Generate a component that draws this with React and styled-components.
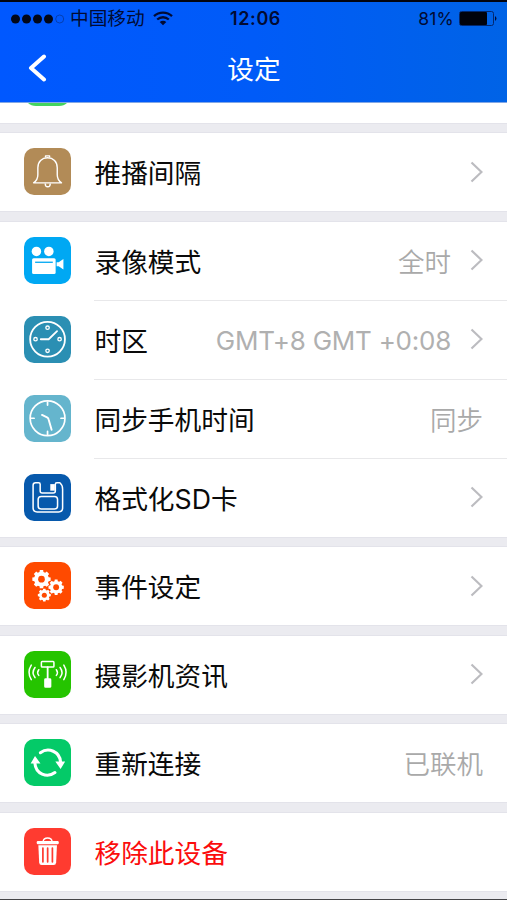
import styled, { createGlobalStyle } from "styled-components";

const GlobalStyle = createGlobalStyle`
  * {
    box-sizing: border-box;
  }

  body {
    margin: 0;
    background: #ebebf0;
    font-family: Inter, "Noto Sans CJK SC", sans-serif;
  }
`;

const Screen = styled.div`
  width: 507px;
  height: 900px;
  overflow: hidden;
  display: flex;
  flex-direction: column;
  background: #ebebf0;
  border-top: 2px solid #02040f;
  border-bottom: 1px solid #444448;
`;

const Header = styled.header`
  flex: none;
  height: 101px;
  background: linear-gradient(90deg, #0058ff 0%, #005bf8 50%, #0063e6 100%);
  border-bottom: 1px solid #3b7ee8;
`;

const StatusBar = styled.div`
  height: 32px;
  padding: 0 9px 0 11px;
  display: grid;
  grid-template-columns: 1fr auto 1fr;
  align-items: center;
  color: #020b33;
`;

const Carrier = styled.div`
  display: flex;
  align-items: center;
  padding-top: 1px;
  font-size: 18.7px;
  line-height: 32px;

  svg:last-child {
    margin: -2px 0 0 8px;
  }
`;

const Dots = styled.svg`
  margin: -1px 5px 0 0;
`;

const Clock = styled.div`
  padding-left: 2px;
  font-size: 18px;
  font-weight: 600;
  letter-spacing: 0.6px;
`;

const Power = styled.div`
  display: flex;
  justify-content: flex-end;
  align-items: center;
  gap: 5px;
  font-size: 17.5px;
  letter-spacing: 0.2px;
`;

const NavBar = styled.div`
  height: 68px;
  display: grid;
  grid-template-columns: 60px 1fr 60px;
  align-items: center;
`;

const BackButton = styled.button`
  padding: 0 0 0 27px;
  border: 0;
  background: none;
  display: flex;
`;

const Title = styled.h1`
  margin: 1px 0 0 1px;
  color: #fff;
  font-size: 26.7px;
  font-weight: 400;
  line-height: 40px;
  text-align: center;
`;

const Group = styled.section`
  flex: none;
  margin-bottom: 10.5px;
  background: #fff;
  box-shadow: 0 0 0 1px rgba(218, 218, 226, 0.45);
`;

const ScrolledRow = styled.div`
  height: 19.5px;
  padding-left: 26px;
  display: flex;
  align-items: flex-start;
`;

const Row = styled.div`
  height: ${(props) => (props.$last ? 78 : 79)}px;
  padding-left: 24px;
  display: flex;
`;

const Tile = styled.div`
  flex: none;
  width: 47px;
  height: 47px;
  margin: 15px 23px 0 0;
  border-radius: 10px;
  background: ${(props) => props.$color};

  svg {
    display: block;
  }
`;

const RowBody = styled.div`
  flex: 1;
  display: flex;
  align-items: center;
  padding: 2px 24px 0 0.5px;
  border-bottom: ${(props) => (props.$last ? "0" : "1px solid #e8e8ea")};
`;

const Label = styled.span`
  flex: 1;
  color: ${(props) => (props.$danger ? "#fb0d0d" : "#0a0a0a")};
  font-size: 26.7px;
  line-height: 40px;
  white-space: nowrap;
`;

const Value = styled.span`
  color: ${(props) => (props.$latin ? "#b0b0b0" : "#a9a9a9")};
  font-size: ${(props) => (props.$latin ? 26 : 26.5)}px;
  font-weight: ${(props) => (props.$latin ? 400 : 350)};
  letter-spacing: ${(props) => (props.$latin ? "-0.25px" : "0")};
  line-height: 40px;
  white-space: nowrap;
`;

const Chevron = styled.svg`
  margin: -3px 0 0 19px;
`;

function gearPath(cx, cy, r, teeth) {
  const step = (Math.PI * 2) / teeth;
  const points = [];
  for (let i = 0; i < teeth; i++) {
    [
      [-0.34, 0.8],
      [-0.23, 1],
      [0.23, 1],
      [0.34, 0.8],
    ].forEach(([offset, scale]) => {
      const angle = (i + offset) * step;
      const x = cx + Math.cos(angle) * r * scale;
      const y = cy + Math.sin(angle) * r * scale;
      points.push(`${x.toFixed(2)} ${y.toFixed(2)}`);
    });
  }
  return `M${points.join("L")}Z`;
}

const icons = {
  bell: (
    <g stroke="#fff" strokeWidth="1.4" strokeLinejoin="round">
      <path d="M9.5 34.5c3-2 4.2-4.5 4.2-8v-7c0-6 4-9.8 9.6-9.8s9.6 3.8 9.6 9.8v7c0 3.5 1.2 6 4.2 8z" />
      <path d="M21.3 9.5V7.8h4v1.7M21 35c0 4.5 5 4.5 5 0" />
    </g>
  ),
  camera: (
    <g fill="#fff">
      <circle cx="12.3" cy="14.3" r="4.7" />
      <circle cx="24.6" cy="14.3" r="4.7" />
      <rect x="8" y="21" width="23.3" height="15.5" rx="1.5" />
      <path d="M32.3 25h2l4.7-3.2v10.3l-4.7-3.2h-2z" />
      <path d="M11 25h17.5" stroke="#00a8f3" strokeWidth="1.3" />
    </g>
  ),
  zone: (
    <g stroke="#fff" strokeWidth="1.8" strokeLinecap="round">
      <circle cx="23.3" cy="23" r="17.2" />
      <g strokeWidth="1.3">
        <circle cx="23.3" cy="11.6" r="1.7" />
        <circle cx="23.3" cy="34.4" r="1.7" />
        <circle cx="11.4" cy="23" r="1.7" />
        <circle cx="35.2" cy="23" r="1.7" />
      </g>
      <path d="M16.6 23h7.8l8.3-8" />
    </g>
  ),
  sync: (
    <g stroke="#fff" strokeWidth="1.7" strokeLinecap="round">
      <circle cx="23.3" cy="23" r="17.2" />
      <path d="M23.3 7v3M23.3 36v3M7 23h3M36.6 23h3" />
      <path d="M17.8 19.7l5 2.5q1.2.6 1.5 1.8l3 10.4" strokeWidth="1.9" />
    </g>
  ),
  floppy: (
    <g stroke="#fff" strokeWidth="1.5" strokeLinejoin="round">
      <path d="M11.5 8.7h3q1.5 0 1.5 1.5v6.5q0 2 2 2h11q2 0 2-2V10.2q0-1.5 1.5-1.5h3q2.7 2.3 2.7 6.3v18.5q0 4-4 4H13q-4 0-4-4V11.2q0-2.5 2.5-2.5z" />
      <rect x="14" y="22.2" width="19.2" height="12.5" rx="3" />
      <path d="M26 10h4.5v6.5H26z" fill="#fff" stroke="none" />
    </g>
  ),
  gears: (
    <g fill="#fff">
      <path d={gearPath(17.3, 17, 9.2, 8)} />
      <path d={gearPath(31.8, 25, 7.7, 8)} />
      <path d={gearPath(20.1, 32.8, 6.5, 8)} />
      <g fill="#ff4a00">
        <circle cx="17.3" cy="17" r="3.3" />
        <circle cx="31.8" cy="25" r="2.9" />
        <circle cx="20.1" cy="32.8" r="2.5" />
      </g>
    </g>
  ),
  signal: (
    <g stroke="#fff" strokeWidth="1.5" strokeLinecap="round">
      <rect x="17.2" y="10.5" width="12.4" height="5.3" rx=".8" />
      <path d="M23.4 16v12" strokeWidth="1.8" />
      <rect x="20.7" y="27.8" width="5.6" height="7.9" rx=".6" fill="#fff" />
      <path d="M14.6 18.5q-2.2 2.8 0 5.6M10.9 16.3q-3.8 5 0 10M7.2 14q-4.5 7.2 0 14.4" />
      <path d="M32 18.5q2.2 2.8 0 5.6M35.7 16.3q3.8 5 0 10M39.400 14q4.5 7.2 0 14.4" />
    </g>
  ),
  reload: (
    <g stroke="#fff" strokeWidth="3" strokeLinecap="round">
      <path d="M16.2 13.6c8-6 19.3-1 20 9.2" />
      <path d="M30.6 33.2c-8 6-19 1-19.8-9.2" />
      <path d="M31 22.3h9.7L36.2 29.800zM6.600 24.300h9.700L10.900 16.700z" fill="#fff" stroke="none" />
    </g>
  ),
  trash: (
    <g fill="#fff">
      <path d="M13.5 12.8h20q1 0 1 1.6t-1 1.6h-20q-1 0-1-1.6t1-1.6z" />
      <path d="M19 13c.5-4.2 8.2-4.2 8.7 0" stroke="#fff" strokeWidth="1.4" fill="none" />
      <path d="M14.2 17h18.4l-.8 17.2q-.2 2.5-2.5 2.5H17.5q-2.300 0-2.500-2.500z" />
      <path d="M18.7 20v13.5M23.4 20v13.5M28.1 20v13.5" stroke="#ff3b30" strokeWidth="1.7" strokeLinecap="round" />
    </g>
  ),
};

const groups = [
  [{ icon: "bell", color: "#b28b57", label: "推播间隔", arrow: true }],
  [
    { icon: "camera", color: "#00a8f3", label: "录像模式", value: "全时", arrow: true },
    { icon: "zone", color: "#2b8fb3", label: "时区", value: "GMT+8 GMT +0:08", latin: true, arrow: true },
    { icon: "sync", color: "#65b5cd", label: "同步手机时间", value: "同步" },
    { icon: "floppy", color: "#0759ac", label: "格式化SD卡", arrow: true },
  ],
  [{ icon: "gears", color: "#ff4a00", label: "事件设定", arrow: true }],
  [{ icon: "signal", color: "#25c400", label: "摄影机资讯", arrow: true }],
  [{ icon: "reload", color: "#04ca68", label: "重新连接", value: "已联机" }],
  [{ icon: "trash", color: "#ff3b30", label: "移除此设备", danger: true }],
];

const SettingRow = ({ item, last }) => (
  <Row $last={last}>
    <Tile $color={item.color}>
      <svg width="47" height="47" viewBox="0 0 46.5 46.5" fill="none">
        {icons[item.icon]}
      </svg>
    </Tile>
    <RowBody $last={last}>
      <Label $danger={item.danger}>{item.label}</Label>
      {item.value && <Value $latin={item.latin}>{item.value}</Value>}
      {item.arrow && (
        <Chevron width="13" height="22" viewBox="0 0 13 22" fill="none">
          <path d="M1.5 1.5L11.5 11L1.5 20.5" stroke="#bcbcc0" strokeWidth="2.2" />
        </Chevron>
      )}
    </RowBody>
  </Row>
);

const App = () => {
  return (
    <Screen>
      <GlobalStyle />
      <Header>
        <StatusBar>
          <Carrier>
            <Dots width="54" height="10" viewBox="0 0 54 10">
              {[4.5, 15.5, 26.5, 37.5].map((x) => (
                <circle key={x} cx={x} cy="5" r="4.5" fill="#020718" />
              ))}
              <circle cx="48.7" cy="5" r="4" fill="none" stroke="#043ca8" strokeWidth=".9" />
            </Dots>
            中国移动
            <svg width="20" height="15" viewBox="0 0 20 15" fill="none" stroke="#020b33">
              <path d="M1 5.2c5-4.8 13-4.8 18 0M4.2 8.5c3.3-3 8.3-3 11.6 0" strokeWidth="2.3" />
              <path d="M6.7 11c2-1.7 4.6-1.7 6.6 0L10 14.3z" fill="#020b33" stroke="none" />
            </svg>
          </Carrier>
          <Clock>12:06</Clock>
          <Power>
            81%
            <svg width="39" height="15" viewBox="0 0 39 15">
              <rect x=".5" y=".5" width="34" height="14" rx="2" fill="none" stroke="#03286e" />
              <rect x="1" y="1" width="27" height="13" rx="1" fill="#00030c" />
              <path d="M36 5q3 2.5 0 5z" fill="#020b33" />
            </svg>
          </Power>
        </StatusBar>
        <NavBar>
          <BackButton aria-label="返回">
            <svg width="20" height="28" viewBox="0 0 20 28" fill="none">
              <path d="M17 2.5L4 14L17 25.5" stroke="#fff" strokeWidth="4" strokeLinecap="round" strokeLinejoin="round" />
            </svg>
          </BackButton>
          <Title>设定</Title>
        </NavBar>
      </Header>
      <Group>
        <ScrolledRow>
          <svg width="43" height="4" viewBox="0 0 43 4">
            <path d="M2 0h39q-3 3-8 3H10Q5 3 2 0z" fill="#43d35f" />
          </svg>
        </ScrolledRow>
      </Group>
      {groups.map((items) => (
        <Group key={items[0].icon}>
          {items.map((item, index) => (
            <SettingRow key={item.icon} item={item} last={index === items.length - 1} />
          ))}
        </Group>
      ))}
    </Screen>
  );
};

export default App;
